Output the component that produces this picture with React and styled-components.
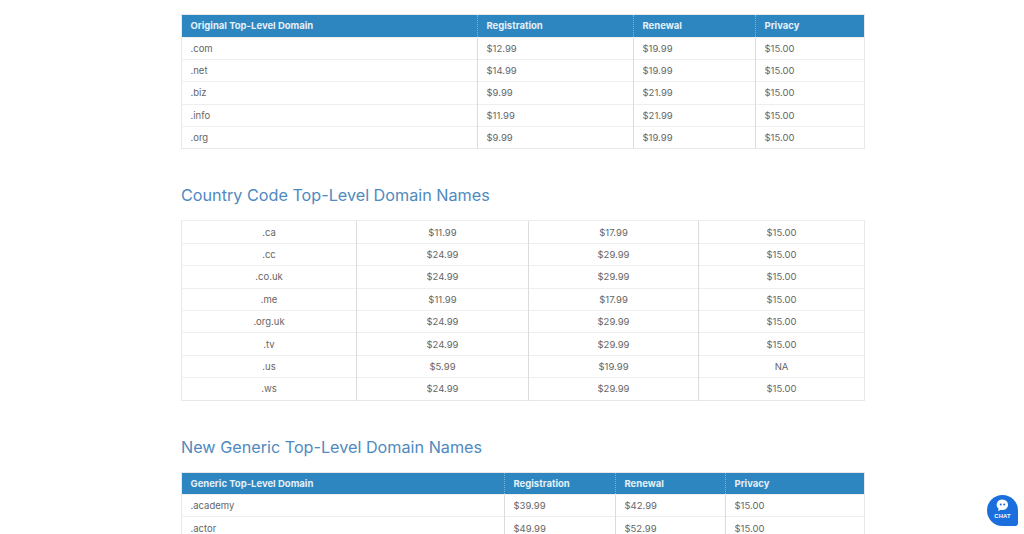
import React from 'react';
import styled, { createGlobalStyle } from 'styled-components';

const GlobalStyle = createGlobalStyle`
  html, body {
    margin: 0;
    height: 534px;
    overflow: hidden;
    background: #fff;
    font-family: Inter, "Open Sans", sans-serif;
  }
`;

const Page = styled.main`
  width: 684px;
  margin-left: 181px;
  padding-top: 14px;
`;

const Table = styled.table`
  width: 683px;
  table-layout: fixed;
  border-collapse: collapse;
  font-size: 9.5px;
  color: #666;
  border: 1px solid #e8e8e8;
`;

const HeadCell = styled.th`
  height: 22.5px;
  padding: 0 8.5px;
  box-sizing: border-box;
  background: #2e86c1;
  color: #e4f0f8;
  font-size: 9.5px;
  font-weight: 700;
  text-align: left;
  border-left: 1px dotted #7fb2d6;
  &:first-child {
    border-left: 0;
  }
`;

const Cell = styled.td`
  height: 22.4px;
  padding: 0 8.5px;
  box-sizing: border-box;
  text-align: ${p => (p.$center ? 'center' : 'left')};
  border-top: 1px solid #eee;
  border-left: 1px solid #dcdcdc;
  &:first-child {
    border-left: 0;
  }
`;

const Heading = styled.h2`
  margin: 36px 0 15px;
  height: 20px;
  font-size: 16.2px;
  line-height: 20px;
  font-weight: 400;
  color: #4f8ac0;
`;

const ChatButton = styled.button`
  position: fixed;
  left: 987px;
  top: 495px;
  width: 31px;
  height: 31px;
  padding: 4px 0 0;
  border: 0;
  border-radius: 50% 50% 3px 50%;
  background: #1a6fdc;
  color: #fff;
  display: flex;
  flex-direction: column;
  align-items: center;
  gap: 1px;
`;

const ChatLabel = styled.span`
  font-size: 5.8px;
  line-height: 6px;
  font-weight: 700;
  letter-spacing: 0.2px;
`;

const ChatIcon = () => (
  <svg width="13" height="13" viewBox="0 0 13 13">
    <path d="M6.5 0.6a5.6 5.2 0 0 1 0 10.4c-.7 0-1.3-.1-1.9-.3L2.2 12.2l.3-2.6A5.6 5.2 0 0 1 6.5 0.6z" fill="#fff" />
    <circle cx="4.8" cy="5.6" r="1" fill="#1a6fdc" />
    <circle cx="8.2" cy="5.6" r="1" fill="#1a6fdc" />
  </svg>
);

const original = [
  ['.com', '$12.99', '$19.99', '$15.00'],
  ['.net', '$14.99', '$19.99', '$15.00'],
  ['.biz', '$9.99', '$21.99', '$15.00'],
  ['.info', '$11.99', '$21.99', '$15.00'],
  ['.org', '$9.99', '$19.99', '$15.00'],
];

const country = [
  ['.ca', '$11.99', '$17.99', '$15.00'],
  ['.cc', '$24.99', '$29.99', '$15.00'],
  ['.co.uk', '$24.99', '$29.99', '$15.00'],
  ['.me', '$11.99', '$17.99', '$15.00'],
  ['.org.uk', '$24.99', '$29.99', '$15.00'],
  ['.tv', '$24.99', '$29.99', '$15.00'],
  ['.us', '$5.99', '$19.99', 'NA'],
  ['.ws', '$24.99', '$29.99', '$15.00'],
];

const generic = [
  ['.academy', '$39.99', '$42.99', '$15.00'],
  ['.actor', '$49.99', '$52.99', '$15.00'],
];

const PriceTable = ({ head, rows, widths, center }) => (
  <Table>
    <colgroup>
      {widths.map((w, i) => (
        <col key={i} width={w} />
      ))}
    </colgroup>
    {head && (
      <thead>
        <tr>
          {head.map(h => (
            <HeadCell key={h}>{h}</HeadCell>
          ))}
        </tr>
      </thead>
    )}
    <tbody>
      {rows.map(row => (
        <tr key={row[0]}>
          {row.map((v, i) => (
            <Cell key={i} $center={center}>
              {v}
            </Cell>
          ))}
        </tr>
      ))}
    </tbody>
  </Table>
);

export default function App() {
  return (
    <>
      <GlobalStyle />
      <Page>
        <PriceTable
          head={['Original Top-Level Domain', 'Registration', 'Renewal', 'Privacy']}
          rows={original}
          widths={[296, 156, 122, 109]}
        />
        <Heading>Country Code Top-Level Domain Names</Heading>
        <PriceTable rows={country} widths={[175, 172, 170, 166]} center />
        <Heading>New Generic Top-Level Domain Names</Heading>
        <PriceTable
          head={['Generic Top-Level Domain', 'Registration', 'Renewal', 'Privacy']}
          rows={generic}
          widths={[323, 111, 110, 139]}
        />
      </Page>
      <ChatButton>
        <ChatIcon />
        <ChatLabel>CHAT</ChatLabel>
      </ChatButton>
    </>
  );
}
